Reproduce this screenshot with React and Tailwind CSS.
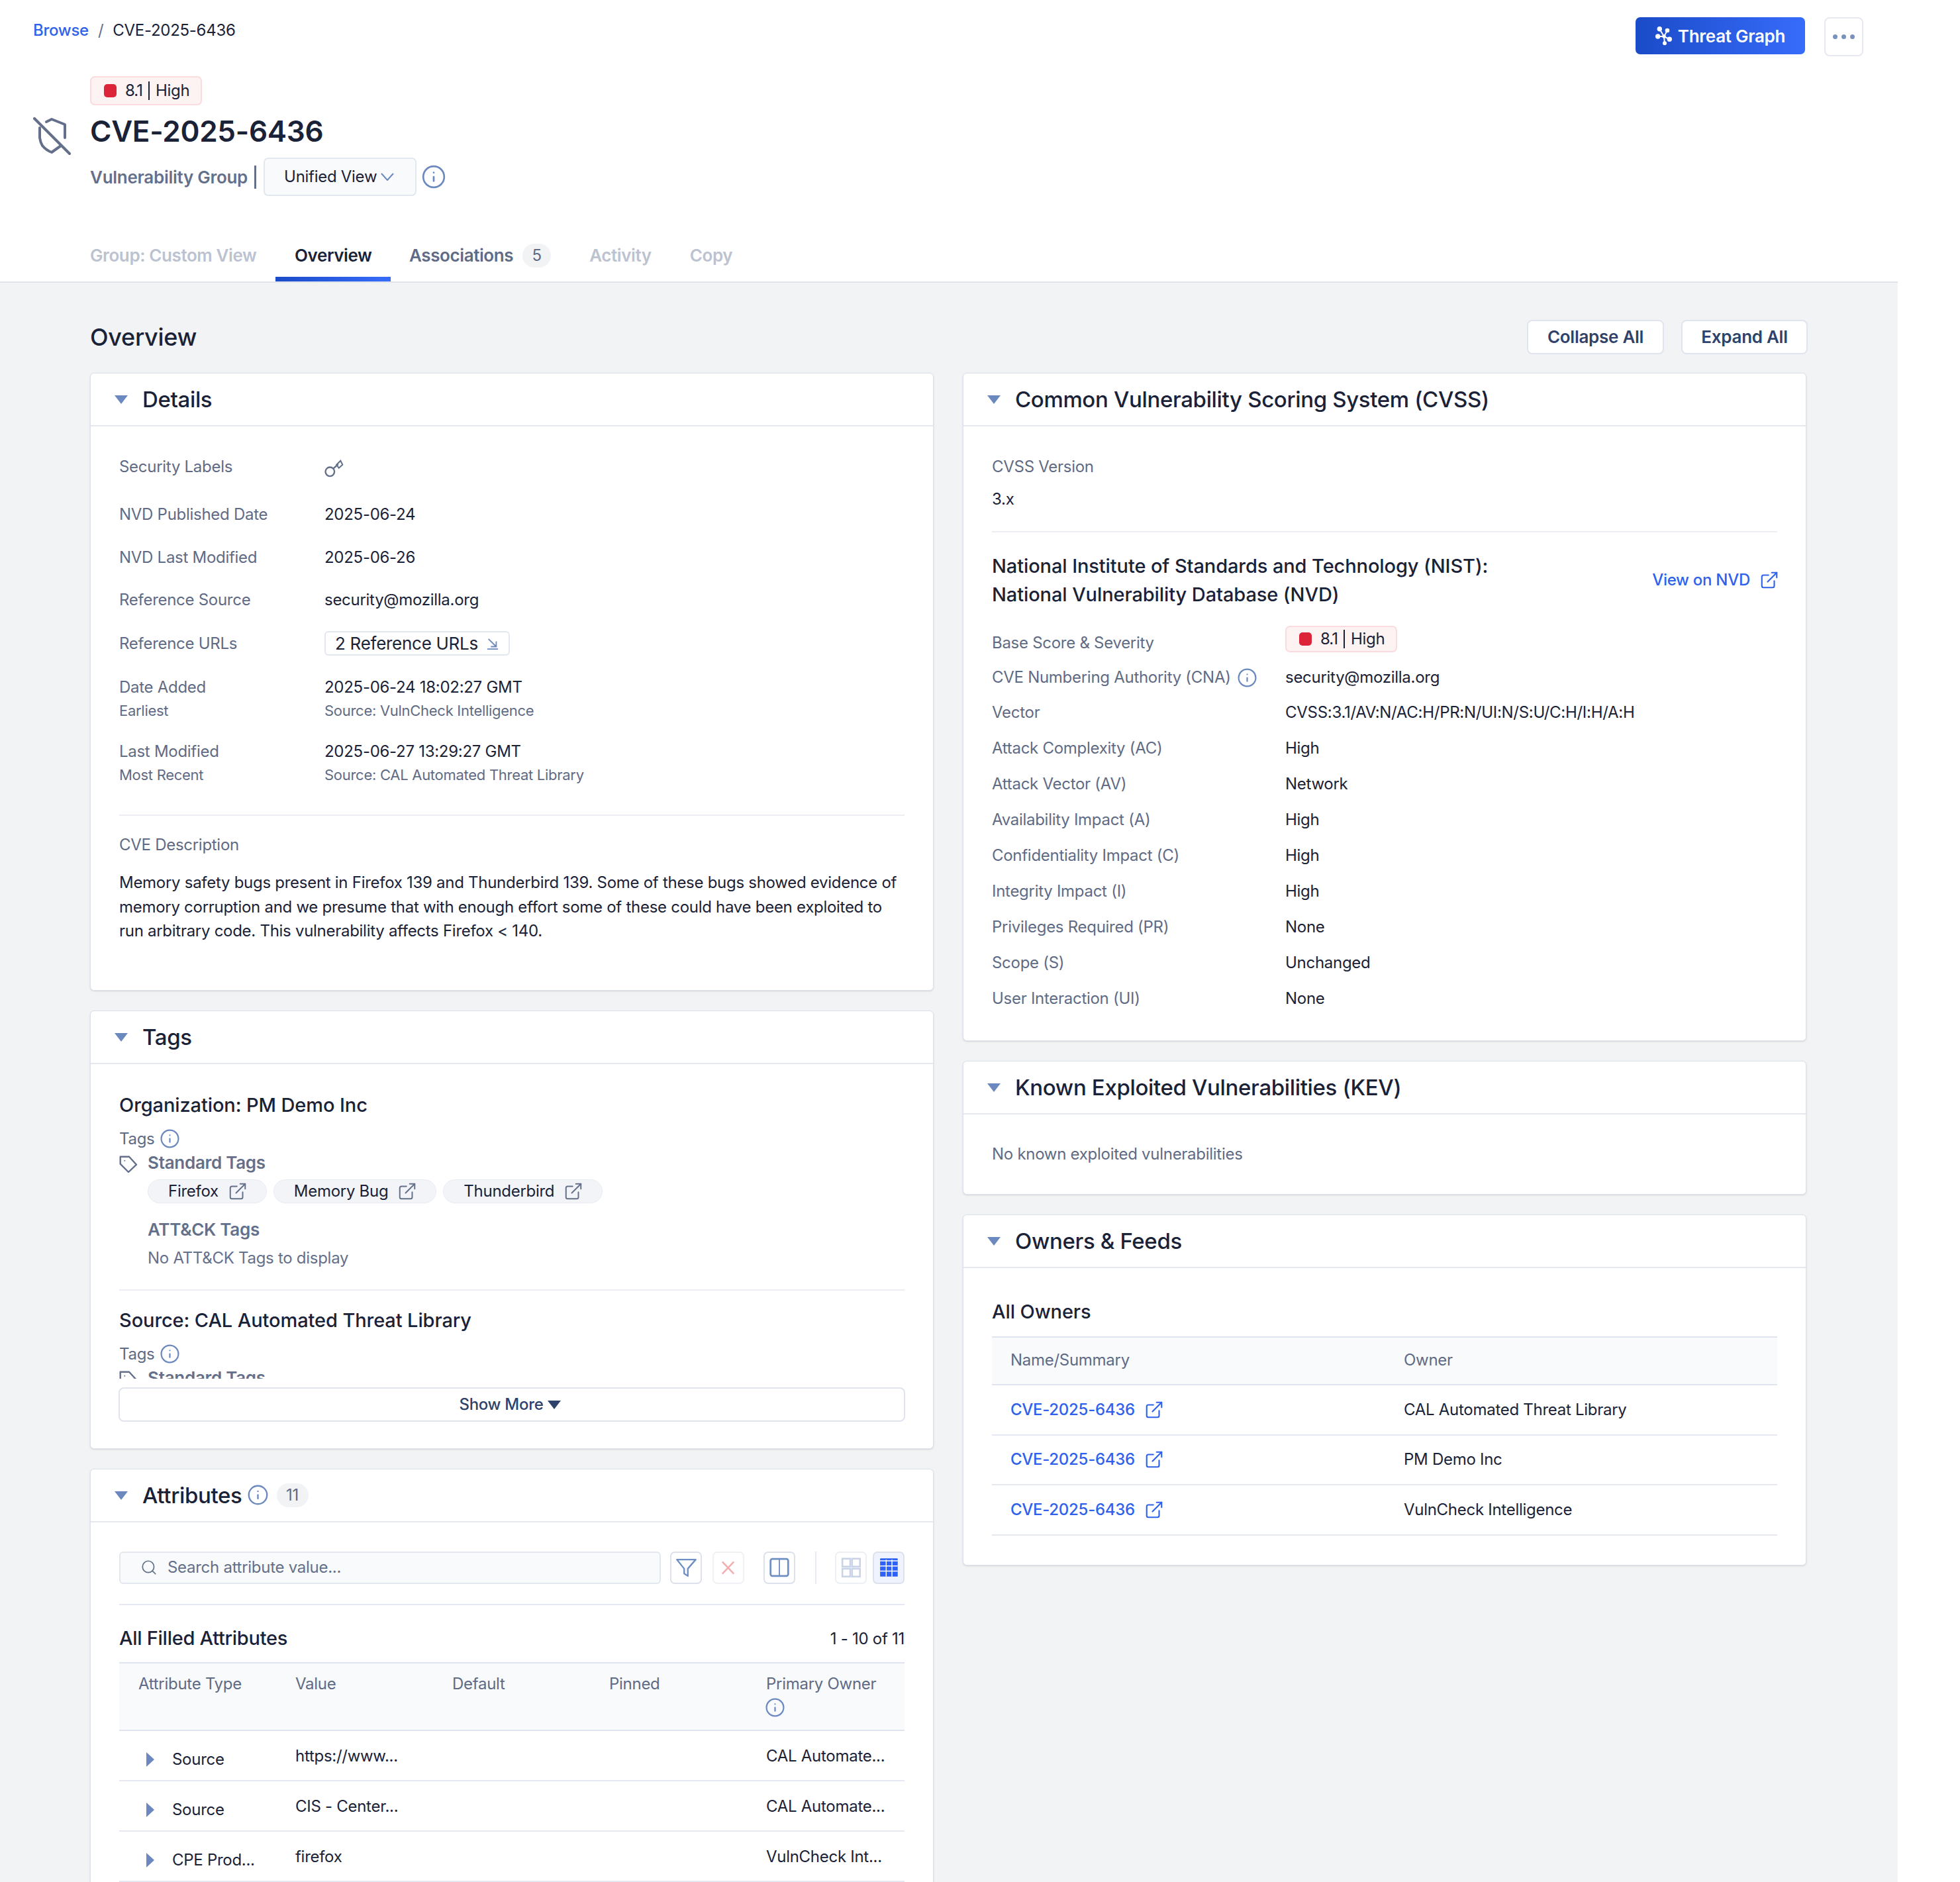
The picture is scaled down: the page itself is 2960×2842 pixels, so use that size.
import React from "react";
import { ExternalLink, Info, Search } from "lucide-react";

const InfoIcon = ({ className = "w-[31px] h-[31px] -m-[2.5px]" }) => (
  <Info className={`${className} text-[#6b88bf] shrink-0`} strokeWidth={1.7} />
);

const Triangle = () => (
  <svg viewBox="0 0 22 16" className="w-[22px] h-[16px] shrink-0">
    <path d="M1 2h20L11 15z" fill="#6b88bf" />
  </svg>
);

const RowCaret = () => (
  <svg viewBox="0 0 12 22" className="w-[12px] h-[22px] shrink-0">
    <path d="M0 0l12 11L0 22z" fill="#6b88bf" />
  </svg>
);

const ShieldSlash = () => (
  <svg
    viewBox="10 12 58 58"
    className="w-[58px] h-[58px] mt-[62px] mr-[28px] shrink-0"
    fill="none"
    stroke="#64708a"
    strokeWidth="4"
    strokeLinecap="round"
    strokeLinejoin="round"
  >
    <path d="M12 14L65 67" />
    <path d="M30 19L38 15L58 23V43" />
    <path d="M20 28V43Q21 50 24 55Q30 62 38 65L52 55" />
  </svg>
);

const KeyIcon = () => (
  <svg viewBox="8 5 32 32" className="w-[32px] h-[32px] mt-[3px] -ml-[2px]" fill="none" stroke="#64708a" strokeWidth="2.4">
    <circle cx="18.3" cy="27.3" r="6.8" />
    <path d="M23.3 22.7L30.7 16" />
    <path d="M34.3 10.7L37.3 16.7L31.7 21.7L28.3 16.7Z" strokeWidth="2" />
  </svg>
);

const TagIcon = () => (
  <svg viewBox="8 7 32 32" className="w-[32px] h-[32px] -ml-[2px] translate-y-[3px] shrink-0" fill="none" stroke="#64708a" strokeWidth="2.4" strokeLinejoin="round">
    <path d="M11.7 10.7H25L36 22.7L24 34L11.7 21.7Z" />
    <circle cx="18.3" cy="16.7" r="1" fill="#64708a" stroke="none" />
  </svg>
);

const ThreatGraphIcon = () => (
  <svg viewBox="12 8 26 30" className="w-[26px] h-[30px] shrink-0" fill="#fff">
    <path d="M25 24L18.3 12.7M25 24L30 15M25 24L15.7 24M25 24L33.3 28.3M25 24L26 34.3" stroke="#fff" strokeWidth="2" />
    <circle cx="25" cy="24" r="2.8" />
    <circle cx="18.3" cy="12.7" r="3.7" />
    <circle cx="30" cy="15" r="3.3" />
    <circle cx="15.7" cy="24" r="3.7" />
    <circle cx="33.3" cy="28.3" r="3.7" />
    <circle cx="26" cy="34.3" r="3" />
  </svg>
);

const FunnelIcon = () => (
  <svg viewBox="0 0 48 49" className="w-[48px] h-[49px]" fill="none" stroke="#6f8ec4" strokeWidth="2.6" strokeLinejoin="round">
    <path d="M9 11H40L27 26V38L21 34V26Z" />
  </svg>
);

const ClearIcon = () => (
  <svg viewBox="0 0 48 49" className="w-[48px] h-[49px]" fill="none" stroke="#f3aeb0" strokeWidth="2.8">
    <path d="M14 14.5L33 34.5M33 14.5L14 34.5" />
  </svg>
);

const ColumnsIcon = () => (
  <svg viewBox="0 0 48 49" className="w-[48px] h-[49px]" fill="none" stroke="#6f8ec4">
    <rect x="9.5" y="10" width="29" height="28" rx="3" strokeWidth="3" />
    <path d="M24 10V38" strokeWidth="2" />
  </svg>
);

const GridIcon = () => (
  <svg viewBox="0 0 48 49" className="w-[48px] h-[49px]" fill="none" stroke="#c9d3e8" strokeWidth="2.8">
    <rect x="10" y="9.5" width="13" height="13" />
    <rect x="26" y="9.5" width="13" height="13" />
    <rect x="10" y="26" width="13" height="13" />
    <rect x="26" y="26" width="13" height="13" />
  </svg>
);

const TableIcon = () => (
  <svg viewBox="0 0 48 49" className="w-[48px] h-[49px]">
    <rect x="10" y="9" width="29" height="30" rx="1" fill="#2e62f6" />
    <path d="M10 13H39M10 21.5H39M10 30H39" stroke="#fff" strokeWidth="1.6" />
    <path d="M20 11V39M29.5 11V39" stroke="#fff" strokeWidth="1.6" />
  </svg>
);

const ReferenceArrow = () => (
  <svg viewBox="0 0 20 20" className="w-[18px] h-[18px]" fill="none" stroke="#6b88bf" strokeWidth="2">
    <path d="M3 2l13 13M16 6v9H7M1 19h18" />
  </svg>
);

const ScoreBadge = ({ tall }) => (
  <div
    className={`flex items-center w-[169px] pl-[19px] gap-[13px] bg-[#fef3f3] border-2 border-[#fadbde] rounded-[7px] text-[24px] text-[#1a2238] ${
      tall ? "h-[44px]" : "h-[40px]"
    }`}
  >
    <span className="w-[19px] h-[20px] rounded-[5px] bg-[#dc2539]" />
    <span className="flex items-center">
      <span className="tracking-[-1px]">8.1</span>
      <span className="w-[2px] h-[28px] bg-[#1a2238] mx-[9px]" />
      High
    </span>
  </div>
);

const Card = ({ title, after, children, className = "" }) => (
  <section className={`bg-white border border-[#dde1ec] rounded-[6px] shadow-sm ${className}`}>
    <div className="h-[80px] flex items-center pl-[35px] gap-[21px] border-b-2 border-[#e5e8f0]">
      <Triangle />
      <h2 className="flex items-center text-[33px] leading-[40px] font-medium tracking-[-0.35px] text-[#1a2238]">{title}</h2>
      {after}
    </div>
    {children}
  </section>
);

const DetailRow = ({ label, sub, value, valueSub, className = "" }) => (
  <div className={`flex text-[24px] leading-[36px] ${className}`}>
    <div className="w-[310px] text-[#5f6b85]">
      <div>{label}</div>
      {sub && <div className="text-[22px] leading-[35px]">{sub}</div>}
    </div>
    <div className="text-[#1a2238]">
      <div>{value}</div>
      {valueSub && <div className="text-[22px] leading-[35px] text-[#5f6b85]">{valueSub}</div>}
    </div>
  </div>
);

const TagChip = ({ name }) => (
  <span className="flex items-center h-[36px] pl-[30px] pr-[28px] gap-[14px] bg-[#f2f4f7] border border-[#e8ebf1] rounded-full text-[24px] text-[#1a2238]">
    {name}
    <ExternalLink className="w-[30px] h-[30px] text-[#64708a]" strokeWidth={1.6} />
  </span>
);

const TagsBlock = () => (
  <>
    <div className="flex items-center gap-[10px] text-[24px] leading-[36px] text-[#5f6b85] mt-[14px]">Tags <InfoIcon /></div>
    <div className="flex items-center gap-[13px] text-[26px] leading-[36px] font-semibold text-[#64708a]">
      <TagIcon />
      Standard Tags
    </div>
  </>
);

const cvssRows = [
  ["Vector", "CVSS:3.1/AV:N/AC:H/PR:N/UI:N/S:U/C:H/I:H/A:H"],
  ["Attack Complexity (AC)", "High"],
  ["Attack Vector (AV)", "Network"],
  ["Availability Impact (A)", "High"],
  ["Confidentiality Impact (C)", "High"],
  ["Integrity Impact (I)", "High"],
  ["Privileges Required (PR)", "None"],
  ["Scope (S)", "Unchanged"],
  ["User Interaction (UI)", "None"],
];

const owners = ["CAL Automated Threat Library", "PM Demo Inc", "VulnCheck Intelligence"];

const attributes = [
  ["Source", "https://www...", "CAL Automate..."],
  ["Source", "CIS - Center...", "CAL Automate..."],
  ["CPE Prod...", "firefox", "VulnCheck Int..."],
];

const SquareButton = ({ children, className = "border-[#dde1ec]" }) => (
  <span className={`flex items-center justify-center w-[48px] h-[49px] border-2 rounded-[7px] overflow-hidden ${className}`}>
    {children}
  </span>
);

export default function App() {
  return (
    <div className="w-[2960px] h-[2842px] overflow-hidden bg-white font-[Inter,sans-serif] tracking-[-0.28px]">
      <div className="w-[2866px] h-[2842px] bg-[#f2f3f5]">
        <header className="relative h-[427px] bg-white border-b-2 border-[#dfe3eb]">
          <div className="flex items-center gap-[14px] pt-[28px] pl-[50px] text-[24px] leading-[36px] text-[#1a2238]">
            <span className="text-[#2e62ec] font-medium">Browse</span>
            <span className="text-[#64708a]">/</span>
            <span>CVE-2025-6436</span>
          </div>

          <div className="absolute top-[26px] left-[2470px] flex items-start gap-[29px]">
            <button className="flex items-center justify-center gap-[8px] w-[256px] h-[56px] rounded-[7px] bg-gradient-to-r from-[#1a4bc8] to-[#376cfb] text-white text-[26px] font-semibold">
              <ThreatGraphIcon />
              Threat Graph
            </button>
            <button className="flex items-center justify-center gap-[6px] w-[59px] h-[59px] bg-white border-2 border-[#e6e9f1] rounded-[8px]">
              <span className="w-[7px] h-[7px] rounded-full bg-[#7a90bd]" />
              <span className="w-[7px] h-[7px] rounded-full bg-[#7a90bd]" />
              <span className="w-[7px] h-[7px] rounded-full bg-[#7a90bd]" />
            </button>
          </div>

          <div className="flex mt-[51px] pl-[50px]">
            <ShieldSlash />
            <div>
              <ScoreBadge tall />
              <h1 className="text-[44px] leading-[54px] font-semibold text-[#1a2238] mt-[12px]">CVE-2025-6436</h1>
              <div className="flex items-center mt-[13px]">
                <span className="text-[26px] font-semibold text-[#64708a]">Vulnerability Group</span>
                <span className="w-[3px] h-[35px] bg-[#64708a] ml-[10px] mr-[11px]" />
                <span className="flex items-center w-[231px] h-[58px] pl-[29px] gap-[6px] bg-[#f8fafc] border-2 border-[#e3e7f0] rounded-[7px] text-[24px] text-[#1a2238]">
                  Unified View
                  <svg viewBox="0 0 20 12" className="w-[20px] h-[12px]" fill="none" stroke="#6b88bf" strokeWidth="2">
                    <path d="M1 1l9 10 9-10" />
                  </svg>
                </span>
                <InfoIcon className="w-[38px] h-[38px] ml-[7px] -my-[2px]" />
              </div>
            </div>
          </div>

          <nav className="absolute left-[136px] bottom-0 flex h-[70px] text-[26px] font-semibold tracking-[-0.4px]">
            <span className="flex items-center pb-[9px] text-[#bcc2cf]">Group: Custom View</span>
            <span className="relative flex items-center pb-[9px] ml-[29px] px-[28.5px] text-[#1a2238]">
              Overview
              <span className="absolute left-0 right-0 bottom-0 h-[7px] bg-gradient-to-r from-[#1a4bc8] to-[#376cfb]" />
            </span>
            <span className="flex items-center pb-[9px] ml-[28px] text-[#5f6b85]">
              Associations
              <span className="flex items-center justify-center w-[43px] h-[36px] ml-[14px] rounded-full bg-[#f2f3f5] text-[24px] font-normal">5</span>
            </span>
            <span className="flex items-center pb-[9px] ml-[58px] text-[#bcc2cf]">Activity</span>
            <span className="flex items-center pb-[9px] ml-[58px] text-[#bcc2cf]">Copy</span>
          </nav>
        </header>

        <main className="pl-[136px] w-[2730px]">
          <div className="flex items-center h-[52px] mt-[56px]">
            <h2 className="text-[36px] font-medium text-[#1a2238]">Overview</h2>
            <button className="ml-auto w-[207px] h-[52px] pb-[2px] bg-white border-2 border-[#e0e4ee] rounded-[8px] text-[26px] font-semibold text-[#2e426b]">Collapse All</button>
            <button className="ml-[26px] w-[191px] h-[52px] pb-[2px] bg-white border-2 border-[#e0e4ee] rounded-[8px] text-[26px] font-semibold text-[#2e426b]">Expand All</button>
          </div>

          <div className="flex items-start gap-[44px] mt-[28px]">
            <div className="w-[1274px] shrink-0 flex flex-col gap-[30px]">
              <Card title="Details">
                <div className="px-[43px] pt-[43px] pb-[70px]">
                  <div className="flex flex-col gap-[29px]">
                    <div className="flex text-[24px] leading-[36px] mb-[7px]">
                      <div className="w-[310px] text-[#5f6b85]">Security Labels</div>
                      <KeyIcon />
                    </div>
                    <DetailRow label="NVD Published Date" value="2025-06-24" />
                    <DetailRow label="NVD Last Modified" value="2025-06-26" />
                    <DetailRow className="-mt-[1px]" label="Reference Source" value="security@mozilla.org" />
                    <div className="flex items-center text-[24px] leading-[36px]">
                      <div className="w-[310px] text-[#5f6b85]">Reference URLs</div>
                      <span className="flex items-center h-[37px] w-[280px] pl-[14px] gap-[13px] border-2 border-[#e3e7f0] rounded-[6px] text-[26px] text-[#1a2238]">
                        2 Reference URLs
                        <ReferenceArrow />
                      </span>
                    </div>
                    <DetailRow className="mt-[1px]" label="Date Added" sub="Earliest" value="2025-06-24 18:02:27 GMT" valueSub="Source: VulnCheck Intelligence" />
                    <DetailRow className="-mt-[3px]" label="Last Modified" sub="Most Recent" value="2025-06-27 13:29:27 GMT" valueSub="Source: CAL Automated Threat Library" />
                  </div>
                  <div className="border-t-2 border-[#eceef3] mt-[42px]" />
                  <div className="text-[24px] leading-[36px] text-[#5f6b85] mt-[26px]">CVE Description</div>
                  <p className="text-[24px] leading-[36.5px] text-[#1a2238] mt-[21px]">
                    Memory safety bugs present in Firefox 139 and Thunderbird 139. Some of these bugs showed evidence of memory corruption and we presume that with enough effort some of these could have been exploited to run arbitrary code. This vulnerability affects Firefox &lt; 140.
                  </p>
                </div>
              </Card>

              <Card title="Tags">
                <div className="px-[43px] pt-[43px] pb-[40px]">
                  <div className="h-[432px] overflow-hidden">
                    <h3 className="text-[29px] leading-[38px] font-medium tracking-[-0.1px] text-[#1a2238]">Organization: PM Demo Inc</h3>
                    <TagsBlock />
                    <div className="flex gap-[10px] ml-[43px] mt-[7px]">
                      <TagChip name="Firefox" />
                      <TagChip name="Memory Bug" />
                      <TagChip name="Thunderbird" />
                    </div>
                    <div className="text-[26px] leading-[36px] font-semibold text-[#64708a] ml-[43px] mt-[22px]">ATT&amp;CK Tags</div>
                    <div className="text-[24px] leading-[36px] text-[#64708a] ml-[43px] mt-[7px]">No ATT&amp;CK Tags to display</div>
                    <div className="border-t-2 border-[#eceef3] mt-[29px]" />
                    <h3 className="text-[29px] leading-[38px] font-medium tracking-[-0.1px] text-[#1a2238] mt-[26px]">Source: CAL Automated Threat Library</h3>
                    <TagsBlock />
                  </div>
                  <div className="-mx-[1px] mt-[13px]">
                    <button className="flex items-center justify-center gap-[6px] w-full h-[52px] pr-[6px] border-2 border-[#e0e4ee] rounded-[8px] text-[24px] font-medium text-[#2e426b]">
                      Show More
                      <svg viewBox="0 0 20 14" className="w-[20px] h-[14px]"><path d="M0 1h20L10 14z" fill="#2e426b" /></svg>
                    </button>
                  </div>
                </div>
              </Card>

              <Card
                title={
                  <>
                    Attributes
                    <InfoIcon className="w-[33px] h-[33px] ml-[7px] -my-[2px] -mr-[3px]" />
                  </>
                }
                after={
                  <span className="flex items-center justify-center w-[48px] h-[36px] -ml-[6px] rounded-full bg-[#f2f3f5] text-[24px] text-[#5f6b85]">11</span>
                }
              >
                <div className="px-[43px] pt-[44px] h-[800px]">
                  <div className="flex items-center">
                    <div className="flex items-center w-[819px] h-[49px] pl-[30px] gap-[15px] bg-[#f8fafc] border-2 border-[#e3e7f0] rounded-[6px] text-[24px] text-[#64708a]">
                      <Search className="w-[26px] h-[26px] text-[#64708a]" strokeWidth={1.6} />
                      Search attribute value...
                    </div>
                    <div className="ml-[14px]"><SquareButton><FunnelIcon /></SquareButton></div>
                    <div className="ml-[16px]"><SquareButton className="border-[#f0f1f5]"><ClearIcon /></SquareButton></div>
                    <div className="ml-[29px]"><SquareButton><ColumnsIcon /></SquareButton></div>
                    <span className="w-[2px] h-[49px] bg-[#e8ebf1] ml-[30px] mr-[28px]" />
                    <SquareButton className="border-[#eceff4]"><GridIcon /></SquareButton>
                    <div className="ml-[9px]"><SquareButton className="border-[#dde1ec] bg-[#eef3fd]"><TableIcon /></SquareButton></div>
                  </div>
                  <div className="border-t-2 border-[#e5e8f0] mt-[30px]" />
                  <div className="flex items-center justify-between h-[86px] pt-[14px] text-[#1a2238]">
                    <h3 className="text-[29px] font-medium">All Filled Attributes</h3>
                    <span className="text-[24px] pt-[2px]">1 - 10 of 11</span>
                  </div>
                  <div className="grid grid-cols-[repeat(5,237px)] h-[104px] pl-[29px] pt-[13px] bg-[#f8fafc] border-y-2 border-[#e0e4ee] text-[24px] leading-[36px] text-[#5f6b85] overflow-hidden">
                    <span>Attribute Type</span>
                    <span>Value</span>
                    <span>Default</span>
                    <span>Pinned</span>
                    <span>
                      Primary Owner
                      <InfoIcon className="w-[31px] h-[31px] mt-[2px] -ml-[2px]" />
                    </span>
                  </div>
                  {attributes.map((row) => (
                    <div key={row[1]} className="grid grid-cols-[repeat(5,237px)] h-[76px] pl-[29px] border-b-2 border-[#e5e8f0] text-[24px] text-[#1a2238] overflow-hidden">
                      <span className="flex items-center gap-[27px] pl-[12px] pt-[12px]">
                        <RowCaret />
                        {row[0]}
                      </span>
                      <span className="flex items-center pt-[2px]">{row[1]}</span>
                      <span />
                      <span />
                      <span className="flex items-center pt-[2px]">{row[2]}</span>
                    </div>
                  ))}
                </div>
              </Card>
            </div>

            <div className="w-[1274px] shrink-0 flex flex-col gap-[30px]">
              <Card title="Common Vulnerability Scoring System (CVSS)">
                <div className="px-[43px] pt-[43px] pb-[45px]">
                  <div className="text-[24px] leading-[36px] text-[#5f6b85]">CVSS Version</div>
                  <div className="text-[24px] leading-[36px] text-[#1a2238] mt-[13px]">3.x</div>
                  <div className="border-t-2 border-[#eceef3] mt-[30px]" />
                  <div className="flex items-center justify-between mt-[29px]">
                    <h3 className="text-[29px] leading-[43px] font-medium tracking-[-0.1px] text-[#1a2238]">
                      National Institute of Standards and Technology (NIST):
                      <br />
                      National Vulnerability Database (NVD)
                    </h3>
                    <span className="flex items-center gap-[14px] -mr-[3px] text-[24px] font-medium text-[#2e62ec]">
                      View on NVD
                      <ExternalLink className="w-[30px] h-[30px]" strokeWidth={1.7} />
                    </span>
                  </div>
                  <div className="flex items-end mt-[26px] text-[24px] leading-[36px]">
                    <div className="w-[443px] text-[#5f6b85] translate-y-[4px]">Base Score &amp; Severity</div>
                    <ScoreBadge />
                  </div>
                  <div className="flex items-center mt-[20px] text-[24px] leading-[36px]">
                    <div className="flex items-center gap-[12px] w-[443px] text-[#5f6b85]">
                      CVE Numbering Authority (CNA)
                      <InfoIcon />
                    </div>
                    <div className="text-[#1a2238]">security@mozilla.org</div>
                  </div>
                  <div className="flex flex-col gap-[18px] mt-[17px]">
                    {cvssRows.map(([label, value]) => (
                      <div key={label} className="flex text-[24px] leading-[36px]">
                        <div className="w-[443px] text-[#5f6b85]">{label}</div>
                        <div className="text-[#1a2238]">{value}</div>
                      </div>
                    ))}
                  </div>
                </div>
              </Card>

              <Card title="Known Exploited Vulnerabilities (KEV)">
                <div className="h-[120px] px-[43px] pt-[42px] text-[24px] leading-[36px] text-[#5f6b85]">
                  No known exploited vulnerabilities
                </div>
              </Card>

              <Card title="Owners & Feeds">
                <div className="px-[43px] pt-[47px] pb-[44px]">
                  <h3 className="text-[29px] leading-[38px] font-medium tracking-[-0.1px] text-[#1a2238]">All Owners</h3>
                  <div className="grid grid-cols-2 items-center h-[74px] mt-[18px] pb-[2px] bg-[#f8fafc] border-y-2 border-[#e0e4ee] text-[24px] text-[#5f6b85]">
                    <span className="pl-[28px]">Name/Summary</span>
                    <span className="pl-[29px]">Owner</span>
                  </div>
                  {owners.map((owner) => (
                    <div key={owner} className="grid grid-cols-2 items-center h-[75.5px] border-b-2 border-[#e5e8f0] text-[24px]">
                      <span className="flex items-center gap-[14px] pl-[28px] font-medium text-[#2e62ec]">
                        CVE-2025-6436
                        <ExternalLink className="w-[30px] h-[30px]" strokeWidth={1.7} />
                      </span>
                      <span className="pl-[29px] text-[#1a2238]">{owner}</span>
                    </div>
                  ))}
                </div>
              </Card>
            </div>
          </div>
        </main>
      </div>
    </div>
  );
}
